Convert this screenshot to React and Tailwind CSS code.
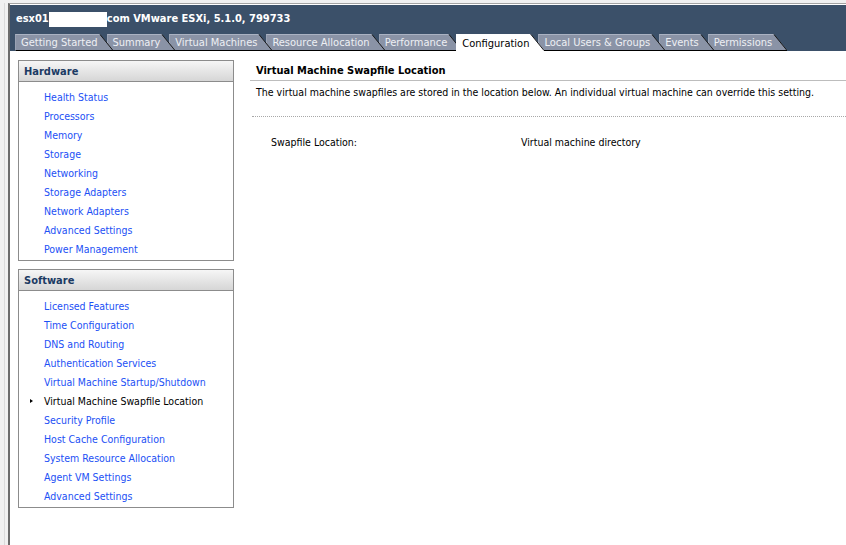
import React from "react";

const FONT = { fontFamily: '"DejaVu Sans Condensed", "Liberation Sans", sans-serif' };

const tabs = [
  { label: "Getting Started", z: "z-[12]" },
  { label: "Summary", z: "z-[11]" },
  { label: "Virtual Machines", z: "z-[10]" },
  { label: "Resource Allocation", z: "z-[9]" },
  { label: "Performance", z: "z-[8]" },
  { label: "Configuration", z: "z-[30]", active: true },
  { label: "Local Users & Groups", z: "z-[6]" },
  { label: "Events", z: "z-[5]" },
  { label: "Permissions", z: "z-[4]" },
];

const hardware = [
  "Health Status",
  "Processors",
  "Memory",
  "Storage",
  "Networking",
  "Storage Adapters",
  "Network Adapters",
  "Advanced Settings",
  "Power Management",
];

const software = [
  "Licensed Features",
  "Time Configuration",
  "DNS and Routing",
  "Authentication Services",
  "Virtual Machine Startup/Shutdown",
  "Virtual Machine Swapfile Location",
  "Security Profile",
  "Host Cache Configuration",
  "System Resource Allocation",
  "Agent VM Settings",
  "Advanced Settings",
];

function Tab({ label, z, active, first }) {
  const fill = active ? "#ffffff" : "#8a93a6";
  return (
    <div className={`relative flex h-[17px] ${z} ${first ? "" : "-ml-[6px]"}`}>
      <div
        className={
          active
            ? "h-[17px] bg-white pt-[2px] pl-[6px] pr-[1px] text-[11px] leading-[15px] text-black whitespace-nowrap"
            : "h-[17px] bg-[#8a93a6] border-t border-l border-b border-t-[#aab2c2] border-l-[#9aa3b5] border-b-black pt-[1px] pl-[5px] pr-[1px] text-[11px] leading-[14px] text-[#eef0f4] whitespace-nowrap"
        }
      >
        {label}
      </div>
      <svg width="14" height="17" viewBox="0 0 14 17" className="block shrink-0">
        <polygon points="0,0.5 1,0.5 14,16 14,17 0,17" fill={fill} />
        {!active && <line x1="0" y1="0.5" x2="1" y2="0.5" stroke="#aab2c2" strokeWidth="1" />}
        <line x1="1" y1="0.5" x2="14" y2="16.5" stroke="#1a1a1a" strokeWidth="1" />
        {!active && <line x1="0" y1="16.5" x2="14" y2="16.5" stroke="#000" strokeWidth="1" />}
      </svg>
    </div>
  );
}

function Box({ title, items, selected, className }) {
  return (
    <div className={`w-[216px] border border-[#8c8c8c] ${className || ""}`}>
      <div className="h-[21px] bg-gradient-to-b from-[#f6f6f6] to-[#d6d6d6] border-b border-[#8c8c8c] pl-[5px] text-[11px] font-bold leading-[21px] text-[#1b3a63]">
        {title}
      </div>
      <div className="pt-[6px] pb-[1px]">
        {items.map((it) => (
          <div key={it} className="relative h-[19px] pl-[25px] text-[10.5px] leading-[19px] whitespace-nowrap">
            {it === selected ? (
              <>
                <span className="absolute left-[11px] top-[7px] w-0 h-0 border-y-[2.5px] border-y-transparent border-l-[3px] border-l-black" />
                <span className="text-black">{it}</span>
              </>
            ) : (
              <span className="text-[#1c50f5]">{it}</span>
            )}
          </div>
        ))}
      </div>
    </div>
  );
}

export default function App() {
  return (
    <div className="w-[846px] h-[545px] bg-[#f0f0f0] flex flex-col overflow-hidden" style={FONT}>
      <div className="h-[3px] shrink-0" />
      <div className="flex flex-1 min-h-0">
        <div className="w-[8px] shrink-0 flex">
          <div className="w-[4px]" />
          <div className="w-px bg-[#dadada]" />
        </div>
        <div className="flex-1 flex flex-col border-l-2 border-t border-l-[#6b6b6b] border-t-[#a3a3a3] min-w-0">
          <div className="h-px bg-white shrink-0" />
          {/* header */}
          <div className="bg-[#3b5069] shrink-0">
            <div className="h-[29px] flex items-center pl-[6px] text-[11px] font-bold text-white whitespace-nowrap">
              <span>esx01</span>
              <span className="inline-block w-[58px] h-[15px] bg-white" />
              <span>com VMware ESXi, 5.1.0, 799733</span>
            </div>
            <div className="flex h-[17px] pl-[5px]">
              {tabs.map((t, i) => (
                <Tab key={t.label} {...t} first={i === 0} />
              ))}
            </div>
          </div>
          {/* content */}
          <div className="flex-1 bg-white flex min-h-0">
            <div className="pl-[8px] pt-[9px] shrink-0">
              <Box title="Hardware" items={hardware} />
              <Box title="Software" items={software} selected="Virtual Machine Swapfile Location" className="mt-[8px]" />
            </div>
            <div className="flex-1 ml-[16px] flex flex-col min-w-0">
              <div className="h-[30px] pt-[12px] pl-[6px] border-b border-[#bdbdbd] text-[11px] font-bold leading-[16px] text-black whitespace-nowrap">
                Virtual Machine Swapfile Location
              </div>
              <div className="pt-[3px] pl-[6px] text-[10.5px] leading-[16px] text-black whitespace-nowrap">
                The virtual machine swapfiles are stored in the location below. An individual virtual machine can override this setting.
              </div>
              <div className="mt-[16px] ml-[2px] border-t border-dotted border-[#a8a8a8]" />
              <div className="mt-[17px] flex text-[10.5px] leading-[16px] text-black whitespace-nowrap">
                <div className="w-[271px] pl-[21px]">Swapfile Location:</div>
                <div>Virtual machine directory</div>
              </div>
            </div>
          </div>
        </div>
      </div>
    </div>
  );
}
